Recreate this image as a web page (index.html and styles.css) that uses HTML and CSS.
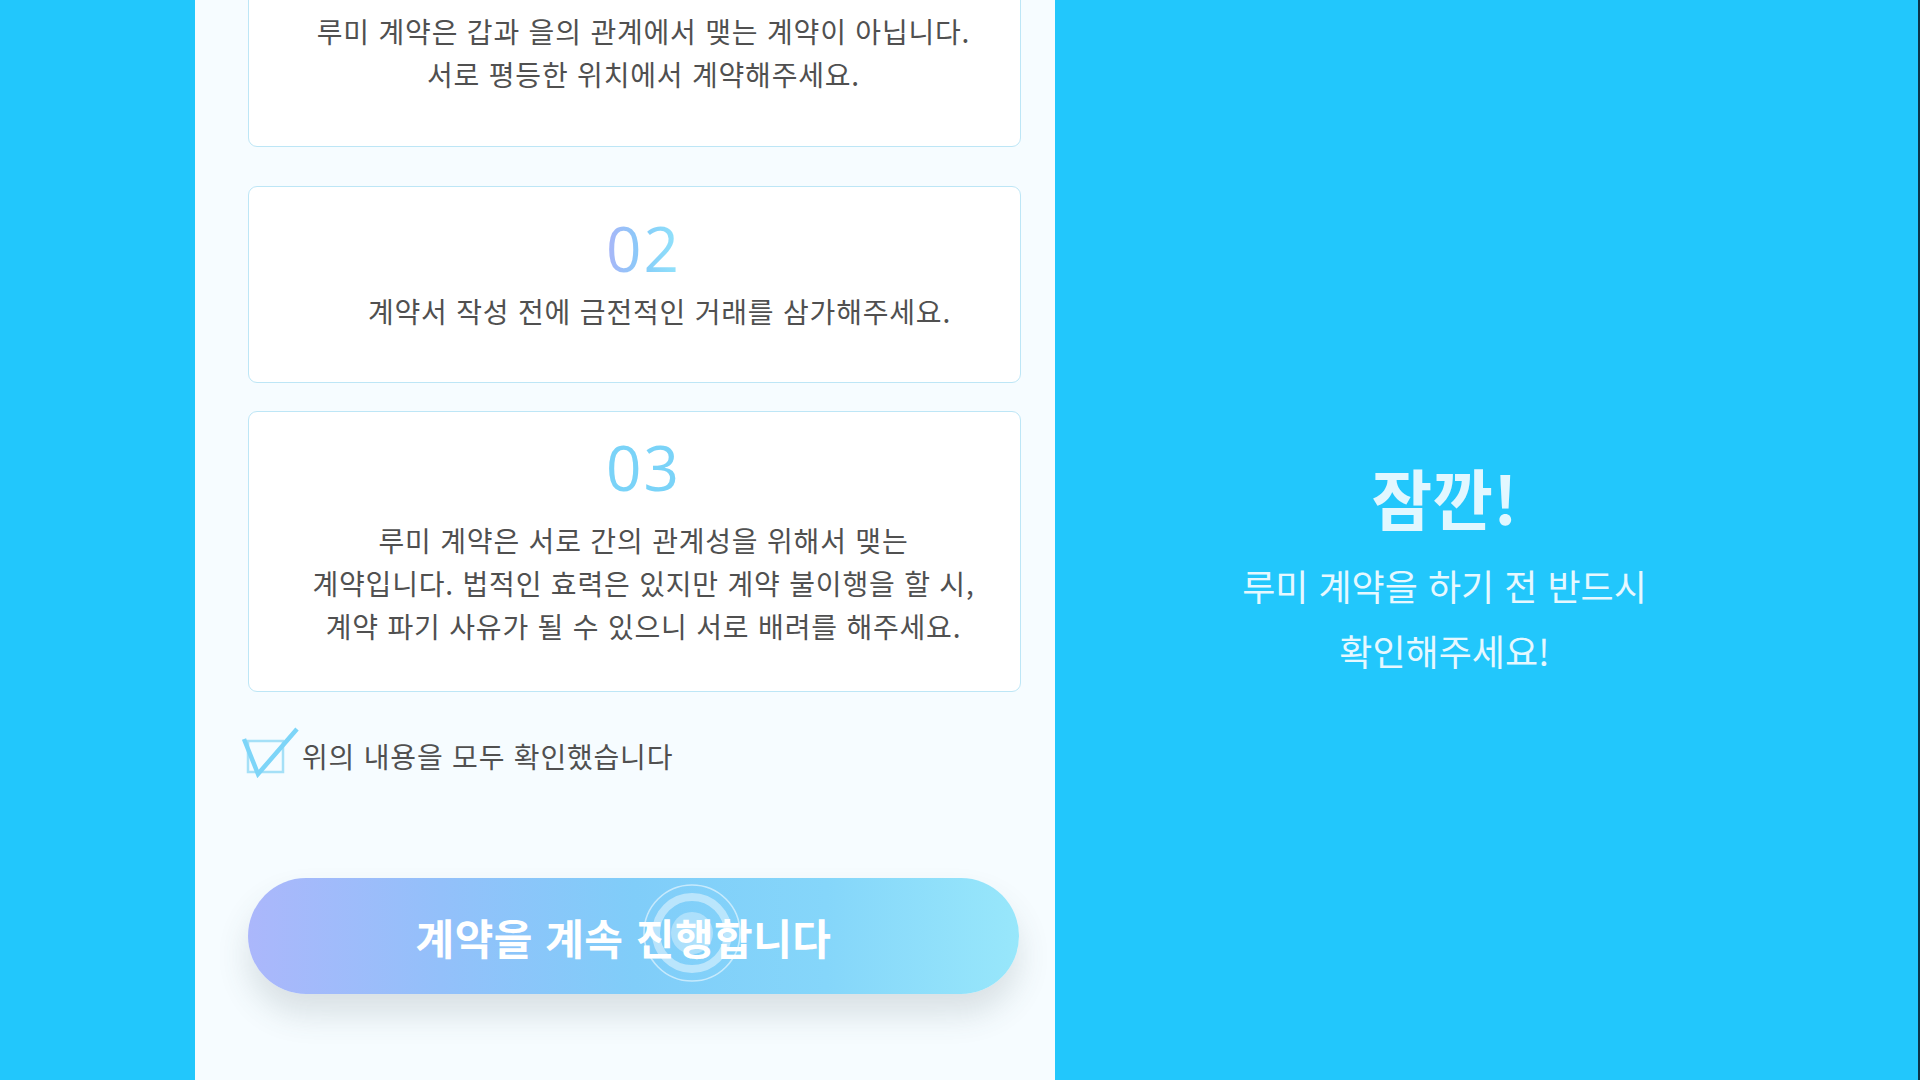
FILE: index.html
```html
<!DOCTYPE html>
<html lang="ko">
<head>
<meta charset="utf-8">
<title>루미 계약</title>
<link rel="stylesheet" href="styles.css">
</head>
<body>
<div class="page">
  <div class="side-left"></div>
  <main class="panel">
    <section class="card card--1">
      <div class="num num--solid">01</div>
      <p class="desc">루미 계약은 갑과 을의 관계에서 맺는 계약이 아닙니다.<br>서로 평등한 위치에서 계약해주세요.</p>
    </section>
    <section class="card card--2">
      <div class="num num--grad">02</div>
      <p class="desc desc--shift">계약서 작성 전에 금전적인 거래를 삼가해주세요.</p>
    </section>
    <section class="card card--3">
      <div class="num num--solid">03</div>
      <p class="desc">루미 계약은 서로 간의 관계성을 위해서 맺는<br>계약입니다. 법적인 효력은 있지만 계약 불이행을 할 시,<br>계약 파기 사유가 될 수 있으니 서로 배려를 해주세요.</p>
    </section>
    <label class="confirm">
      <svg class="check" width="58" height="52" viewBox="0 0 58 52">
        <rect x="6" y="15" width="35" height="31" fill="none" stroke="#a5e0f7" stroke-width="2.5"/>
        <path d="M2 13 L16 48 L55 3" fill="none" stroke="#7dd5f8" stroke-width="4.5" stroke-linejoin="miter"/>
      </svg>
      <span class="confirm-text">위의 내용을 모두 확인했습니다</span>
    </label>
    <button class="cta" type="button">
      <span class="cta-text">계약을 계속 진행합니다</span>
      <svg class="ripple" width="110" height="110" viewBox="0 0 110 110">
        <circle cx="55" cy="55" r="48" fill="none" stroke="rgba(255,255,255,0.55)" stroke-width="1.6"/>
        <circle cx="55" cy="55" r="36" fill="none" stroke="rgba(255,255,255,0.45)" stroke-width="8"/>
        <circle cx="55" cy="55" r="21" fill="rgba(255,255,255,0.35)"/>
      </svg>
    </button>
  </main>
  <aside class="side-right">
    <h1 class="wait-title">잠깐!</h1>
    <p class="wait-sub">루미 계약을 하기 전 반드시<br>확인해주세요!</p>
  </aside>
</div>
</body>
</html>
```
FILE: styles.css
```css
* { box-sizing: border-box; }
html, body {
  margin: 0;
  padding: 0;
  width: 1920px;
  height: 1080px;
  overflow: hidden;
  font-family: "Noto Sans CJK KR", "Noto Sans", sans-serif;
}
.page {
  display: flex;
  width: 1920px;
  height: 1080px;
  background: #22c7fc;
}
.side-left {
  width: 195px;
  flex: 0 0 195px;
  background: #22c7fc;
}
.panel {
  width: 860px;
  flex: 0 0 860px;
  height: 1080px;
  background: #f6fcff;
  padding: 0 34px 0 53px;
  display: flex;
  flex-direction: column;
}
.card {
  background: #ffffff;
  border: 1.5px solid #bde6f6;
  border-radius: 9px;
  text-align: center;
  padding: 21px 30px 0 48px;
}
.card--1 { margin-top: -98px; padding-bottom: 50px; }
.card--2 { margin-top: 39px; padding-top: 26px; padding-bottom: 49px; }
.card--3 { margin-top: 28px; padding-top: 20px; padding-bottom: 43px; }
.card--3 .num { margin-bottom: 17px; }
.num {
  font-family: "Open Sans", "Noto Sans", sans-serif;
  font-size: 62px;
  line-height: 70px;
  font-weight: 400;
  letter-spacing: 2px;
}
.num--solid { color: #7ad3f8; }
.num--grad {
  display: inline-block;
  background: linear-gradient(90deg, #aab5f8 0%, #86cdf9 50%, #92e4fb 100%);
  -webkit-background-clip: text;
  background-clip: text;
  color: transparent;
}
.card--2 .num { margin-bottom: 7px; }
.card--1 .num { margin-bottom: 16px; }
.desc {
  margin: 0;
  font-size: 28px;
  line-height: 43px;
  color: #505050;
  letter-spacing: 0.8px;
}
.desc--shift { padding-left: 32px; }
.confirm {
  display: flex;
  align-items: center;
  margin-top: 38px;
  margin-left: -6px;
  height: 52px;
}
.check {
  flex: 0 0 58px;
  margin-top: -8px;
}
.confirm-text {
  margin-left: 2px;
  font-size: 28px;
  color: #505050;
  letter-spacing: 0.8px;
}
.cta {
  position: relative;
  margin-top: 96px;
  width: 771px;
  height: 116px;
  border: none;
  border-radius: 58px;
  background: linear-gradient(90deg, #abb7fb 0%, #93c0fa 25%, #80cdf9 50%, #85d6fa 75%, #98e7fb 100%);
  box-shadow: 0 20px 32px rgba(60, 80, 90, 0.16);
  display: flex;
  align-items: center;
  justify-content: center;
  padding: 0;
  font-family: inherit;
  cursor: pointer;
}
.cta-text {
  position: relative;
  z-index: 1;
  color: #ffffff;
  font-size: 42px;
  font-weight: 700;
  letter-spacing: 0.5px;
  margin-left: -20px;
}
.ripple {
  position: absolute;
  left: 389px;
  top: 0;
  z-index: 2;
  pointer-events: none;
}
.side-right {
  flex: 1;
  background: #22c7fc;
  border-right: 2px solid #0b3448;
  display: flex;
  flex-direction: column;
  align-items: center;
  justify-content: center;
  padding: 58px 84px 0 0;
}
.wait-title {
  margin: 0;
  font-size: 66px;
  line-height: 80px;
  font-weight: 700;
  color: #e2f7ff;
}
.wait-sub {
  margin: 17px 0 0;
  font-size: 36px;
  line-height: 65px;
  font-weight: 400;
  color: #e6f8ff;
  text-align: center;
}
```
